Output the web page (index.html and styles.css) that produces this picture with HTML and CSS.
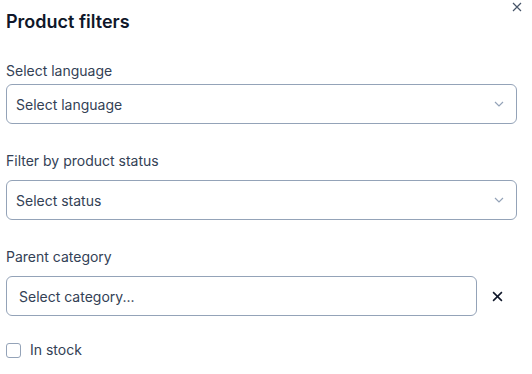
FILE: index.html
```html
<!DOCTYPE html>
<html lang="en">
<head>
	<meta charset="UTF-8">
	<title>Product filters</title>
	<link rel="stylesheet" href="styles.css">
</head>
<body>

<div class="panel">
	<button class="close" aria-label="Close">
		<svg width="10" height="10" viewBox="0 0 10 10"><path d="M1 1 9 9M9 1 1 9" stroke="currentColor" stroke-width="1.2" fill="none"/></svg>
	</button>

	<h2 class="title">Product filters</h2>

	<div class="field field-first">
		<label class="label">Select language</label>
		<div class="select">
			<span>Select language</span>
			<svg class="chev" width="10" height="6" viewBox="0 0 10 6"><path d="M1 1 5 5 9 1" stroke="currentColor" stroke-width="1.2" fill="none"/></svg>
		</div>
	</div>

	<div class="field">
		<label class="label">Filter by product status</label>
		<div class="select">
			<span>Select status</span>
			<svg class="chev" width="10" height="6" viewBox="0 0 10 6"><path d="M1 1 5 5 9 1" stroke="currentColor" stroke-width="1.2" fill="none"/></svg>
		</div>
	</div>

	<div class="field">
		<label class="label">Parent category</label>
		<div class="row">
			<div class="input">Select category...</div>
			<button class="clear" aria-label="Clear">
				<svg width="11" height="11" viewBox="0 0 10 10"><path d="M1 1 9 9M9 1 1 9" stroke="currentColor" stroke-width="1.4" fill="none"/></svg>
			</button>
		</div>
	</div>

	<label class="check">
		<span class="box"></span>
		In stock
	</label>
</div>

</body>
</html>
```

FILE: styles.css
```css
* {
	box-sizing: border-box;
}
body {
	margin: 0;
	background: #fff;
	font-family: Inter, "Noto Sans", sans-serif;
	color: #334155;
}
.panel {
	position: relative;
	padding: 8px 15px 6px 6px;
	display: flex;
	flex-direction: column;
}
.close {
	position: absolute;
	top: 2px;
	right: 10px;
	border: 0;
	background: none;
	padding: 0;
	color: #475569;
	display: flex;
}
.title {
	margin: 0;
	font-size: 18px;
	line-height: 28px;
	font-weight: 600;
	color: #0f172a;
}
.field {
	margin-top: 27px;
	display: flex;
	flex-direction: column;
}
.field-first {
	margin-top: 25px;
}
.label {
	font-size: 14px;
	line-height: 20px;
	margin-bottom: 9px;
}
.field-first .label {
	margin-bottom: 3px;
}
.select {
	height: 40px;
	border: 1px solid #94a3b8;
	border-radius: 6px;
	display: flex;
	align-items: center;
	justify-content: space-between;
	padding: 0 12px 0 9px;
	font-size: 14px;
}
.chev {
	color: #94a3b8;
}
.row {
	display: flex;
	align-items: center;
}
.input {
	flex: 1;
	height: 40px;
	border: 1px solid #94a3b8;
	border-radius: 6px;
	display: flex;
	align-items: center;
	padding: 0 12px;
	font-size: 14px;
}
.clear {
	width: 40px;
	border: 0;
	background: none;
	padding: 0;
	color: #0f172a;
	display: flex;
	justify-content: center;
}
.check {
	margin-top: 24px;
	display: flex;
	align-items: center;
	gap: 9px;
	font-size: 14px;
	line-height: 20px;
}
.box {
	width: 15px;
	height: 15px;
	border: 1px solid #94a3b8;
	border-radius: 3px;
}
```
